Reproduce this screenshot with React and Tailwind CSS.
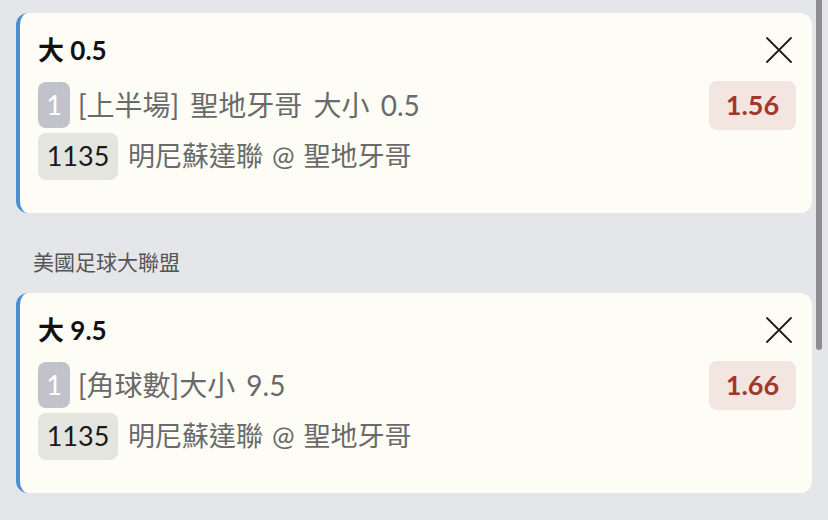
const bets = [
  {
    title: "大 0.5",
    market: "[上半場] 聖地牙哥 大小 0.5",
    code: "1135",
    match: "明尼蘇達聯 @ 聖地牙哥",
    odds: "1.56",
  },
  {
    title: "大 9.5",
    market: "[角球數]大小 9.5",
    code: "1135",
    match: "明尼蘇達聯 @ 聖地牙哥",
    odds: "1.66",
  },
];

function CloseIcon() {
  return (
    <svg viewBox="0 0 26 26" className="mr-[4px] h-[26px] w-[26px] text-[#1c1c1c]" fill="none">
      <path d="M1 1L25 25M25 1L1 25" stroke="currentColor" strokeWidth="1.8" strokeLinecap="round" />
    </svg>
  );
}

function BetCard({ bet }) {
  return (
    <div className="rounded-xl border-l-4 border-[#4a8fd2] bg-[#fdfdf6] pl-[18px] pr-4 pt-[21px] pb-[33px]">
      <div className="flex h-8 items-center justify-between">
        <h2 className="text-[26px] font-bold leading-8 text-[#111]">{bet.title}</h2>
        <CloseIcon />
      </div>
      <div className="mt-4 flex h-[46px] items-center justify-between">
        <div className="flex items-center gap-2">
          <span className="flex h-[46px] w-8 items-center justify-center rounded-lg bg-[#c2c2ca] text-[27px] text-white">
            1
          </span>
          <span className="text-[28px] text-[#6a6a6a] [word-spacing:4px]">{bet.market}</span>
        </div>
        <span className="flex h-[49px] w-[87px] items-center justify-center rounded-lg bg-[#f3e6e1] text-[27px] font-bold text-[#a4362b]">
          {bet.odds}
        </span>
      </div>
      <div className="mt-[5px] flex h-[47px] items-center gap-[10px]">
        <span className="flex h-[47px] w-20 items-center justify-center rounded-lg bg-[#e5e5df] text-[27px] text-[#1a1a1a]">
          {bet.code}
        </span>
        <span className="text-[27px] text-[#6a6a6a] [word-spacing:2px]">{bet.match}</span>
      </div>
    </div>
  );
}

export default function App() {
  return (
    <div
      className="relative h-[520px] w-[828px] overflow-hidden bg-[#e4e6e9] pl-4 pr-4 pt-[13px]"
      style={{ fontFamily: 'Lato, "Noto Sans CJK TC", sans-serif' }}
    >
      <BetCard bet={bets[0]} />
      <p className="mt-[35px] mb-[17px] pl-[17px] text-[21px] leading-7 text-[#555]">美國足球大聯盟</p>
      <BetCard bet={bets[1]} />
      <div className="absolute right-[6px] top-0 h-[350px] w-[6px] rounded-b-full bg-[#8e8e91]" />
    </div>
  );
}
